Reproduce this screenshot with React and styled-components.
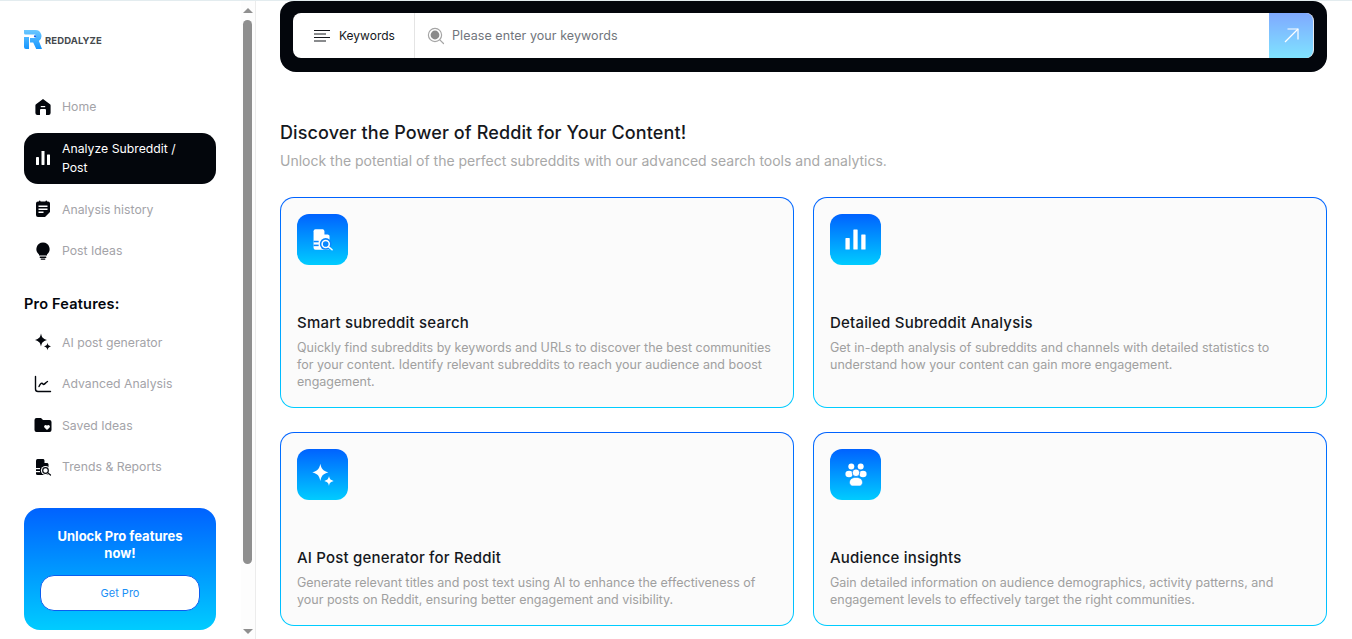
import React from "react";
import styled, { createGlobalStyle } from "styled-components";

const GlobalStyle = createGlobalStyle`
  html, body {
    margin: 0;
    height: 100%;
    background: #fff;
    overflow: hidden;
  }
  * {
    box-sizing: border-box;
  }
`;

const Page = styled.div`
  width: 100%;
  height: 100vh;
  display: flex;
  flex-direction: column;
  font-family: "Inter", "Liberation Sans", sans-serif;
  overflow: hidden;
`;

const TopStrip = styled.div`
  flex: none;
  height: 1px;
  background: #e3ecef;
`;

const Body = styled.div`
  flex: 1;
  min-height: 0;
  display: flex;
`;

const Sidebar = styled.aside`
  flex: none;
  width: 256px;
  display: flex;
  border-right: 1px solid #ececec;
`;

const SideContent = styled.div`
  flex: none;
  width: 241px;
  padding: 29px 24px 0;
`;

const ScrollTrack = styled.div`
  flex: 1;
  display: flex;
  flex-direction: column;
  align-items: center;
  padding: 7px 1px 0 0;
  background: #fdfdfd;
`;

const Arrow = styled.div`
  flex: none;
  width: 0;
  height: 0;
  border-left: 5px solid transparent;
  border-right: 5px solid transparent;
  ${(p) =>
    p.$down
      ? "border-top: 5px solid #8f8f8f;"
      : "border-bottom: 5px solid #8f8f8f;"}
`;

const Thumb = styled.div`
  flex: none;
  width: 9px;
  height: 544px;
  margin: 7px 0 65px;
  border-radius: 5px;
  background: #8f8f8f;
`;

const LogoRow = styled.div`
  display: flex;
  align-items: center;
  gap: 3px;
  height: 20px;
  margin-bottom: 36px;
`;

const LogoText = styled.span`
  font-size: 9.5px;
  font-weight: 700;
  letter-spacing: 0.1px;
  color: #45494d;
`;

const NavItem = styled.div`
  display: flex;
  align-items: center;
  gap: 10px;
  width: 192px;
  min-height: ${(p) => (p.$active ? "51px" : "41.5px")};
  padding: 0 30px 0 10px;
  border-radius: 14px;
  background: ${(p) => (p.$active ? "#03060c" : "transparent")};
  color: ${(p) => (p.$active ? "#fff" : "#a3a3a8")};
  font-size: 12.25px;
  line-height: 19px;
  margin: ${(p) => (p.$active ? "5px 0" : "0")};
`;

const NavIcon = styled.span`
  flex: none;
  width: 18px;
  height: 18px;
  display: flex;
  align-items: center;
  justify-content: center;
  color: ${(p) => (p.$active ? "#fff" : "#03060c")};
`;

const SectionLabel = styled.div`
  margin: 22px 0 8px;
  font-size: 14.5px;
  font-weight: 600;
  letter-spacing: 0.2px;
  line-height: 20px;
  color: #03060c;
`;

const ProCard = styled.div`
  width: 192px;
  height: 122px;
  margin-top: 20px;
  padding: 20px 16px 0;
  border-radius: 16px;
  background: linear-gradient(180deg, #0062ff 0%, #00ccff 100%);
`;

const ProTitle = styled.div`
  padding: 0 14px;
  font-size: 13px;
  font-weight: 700;
  line-height: 17px;
  text-align: center;
  color: #fff;
`;

const ProButton = styled.button`
  display: block;
  width: 160px;
  height: 36px;
  margin-top: 13px;
  border: 1px solid #0a5ef0;
  border-radius: 14px;
  background: #fff;
  color: #1b8ff5;
  font-family: inherit;
  font-size: 11px;
`;

const Main = styled.main`
  flex: 1;
  min-width: 0;
  padding: 0 25px 0 24px;
`;

const SearchShell = styled.div`
  height: 71px;
  padding: 12px 13px 14px;
  border-radius: 14px 14px 16px 16px;
  background: #03060c;
`;

const SearchBar = styled.div`
  height: 45px;
  display: flex;
  align-items: stretch;
  border-radius: 8px;
  background: #fff;
  overflow: hidden;
  border-right: 1px solid #e6e9ee;
`;

const KeywordCell = styled.div`
  flex: none;
  width: 122px;
  display: flex;
  align-items: center;
  gap: 8px;
  padding-left: 20px;
  border-right: 1px solid #e4e4e4;
  font-size: 12px;
  color: #15181d;
`;

const InputCell = styled.div`
  flex: 1;
  display: flex;
  align-items: center;
  gap: 7px;
  padding-left: 12px;
  font-size: 12.5px;
  letter-spacing: 0.07px;
  color: #71757c;
`;

const GoButton = styled.div`
  flex: none;
  width: 44px;
  display: flex;
  align-items: center;
  justify-content: center;
  background: linear-gradient(180deg, #7fa9ff 0%, #7fe3ff 100%);
`;

const Heading = styled.h1`
  margin: 49px 0 0;
  font-size: 18px;
  font-weight: 450;
  letter-spacing: 0.11px;
  line-height: 24px;
  color: #15181d;
`;

const Subheading = styled.p`
  margin: 7px 0 0;
  font-size: 14px;
  line-height: 18px;
  color: #a8a8a8;
`;

const CardGrid = styled.div`
  display: grid;
  grid-template-columns: 514px 514px;
  grid-template-rows: 211px 194px;
  gap: 24px 19px;
  margin-top: 27px;
`;

const Card = styled.div`
  padding: 16px;
  border: 1px solid transparent;
  border-radius: 14px;
  background: linear-gradient(#fbfbfb, #fbfbfb) padding-box,
    linear-gradient(180deg, #0062ff 0%, #00ccff 100%) border-box;
`;

const CardIcon = styled.div`
  width: 51px;
  height: 51px;
  display: flex;
  align-items: center;
  justify-content: center;
  border-radius: 12px;
  background: linear-gradient(180deg, #0062ff 0%, #00ccff 100%);
  color: #fff;
`;

const CardTitle = styled.h2`
  margin: 48px 0 0;
  font-size: 15px;
  font-weight: 450;
  letter-spacing: 0.2px;
  line-height: 20px;
  color: #15181d;
`;

const CardText = styled.p`
  margin: 6px 0 0;
  font-size: 12.5px;
  line-height: 17px;
  color: #a0a0a0;
`;

const HomeIcon = () => (
  <svg width="18" height="18" viewBox="0 0 18 18" fill="currentColor">
    <path d="M9 1 L16 6.2 a1.5 1.5 0 0 1 .6 1.2 V15 a2 2 0 0 1-2 2 H12 v-5 a1 1 0 0 0-1-1 H7 a1 1 0 0 0-1 1 v5 H3.4 a2 2 0 0 1-2-2 V7.4 a1.5 1.5 0 0 1 .6-1.2 Z" />
    <rect x="6.8" y="8" width="4.4" height="1.2" fill="#fff" />
  </svg>
);

const BarsIcon = ({ size = 16 }) => (
  <svg width={size} height={size} viewBox="0 0 16 16" fill="currentColor">
    <rect x="1" y="7" width="3" height="8" rx="0.4" />
    <rect x="6.5" y="1" width="3" height="14" rx="0.4" />
    <rect x="12" y="4.5" width="3" height="10.5" rx="0.4" />
  </svg>
);

const HistoryIcon = () => (
  <svg width="16" height="18" viewBox="0 0 16 18" fill="currentColor">
    <path d="M3 1.5 h10 a2 2 0 0 1 2 2 V12 l-5 5 H3 a2 2 0 0 1-2-2 V3.5 a2 2 0 0 1 2-2 Z" />
    <rect x="4" y="0.5" width="1.4" height="3" rx="0.7" />
    <rect x="10.6" y="0.5" width="1.4" height="3" rx="0.7" />
    <rect x="3.5" y="5.5" width="9" height="1.5" fill="#fff" />
    <rect x="3.5" y="8.5" width="9" height="1.5" fill="#fff" />
    <rect x="3.5" y="11.5" width="5" height="1.5" fill="#fff" />
  </svg>
);

const BulbIcon = () => (
  <svg width="16" height="18" viewBox="0 0 16 18" fill="currentColor">
    <path d="M8 0.5 a6.7 6.7 0 0 1 4 12 V13.5 H4 V12.5 a6.7 6.7 0 0 1 4-12 Z" />
    <rect x="4.6" y="14.6" width="6.8" height="1.3" rx="0.6" />
    <rect x="5.6" y="16.5" width="4.8" height="1.2" rx="0.6" />
  </svg>
);

const SparkIcon = ({ size = 18 }) => (
  <svg width={size} height={size} viewBox="0 0 18 18" fill="currentColor">
    <path d="M7 0.5 C7.8 4.4 8.8 5.6 13 7 C8.8 8.4 7.8 9.6 7 13.5 C6.2 9.6 5.2 8.4 1 7 C5.2 5.6 6.2 4.4 7 0.5 Z" />
    <path d="M13.5 9.8 C13.9 12 14.6 12.7 17 13.5 C14.6 14.3 13.9 15 13.5 17.2 C13.1 15 12.4 14.3 10 13.5 C12.4 12.7 13.1 12 13.5 9.8 Z" />
  </svg>
);

const ChartIcon = () => (
  <svg width="18" height="18" viewBox="0 0 18 18" fill="none" stroke="currentColor" strokeWidth="1.4" strokeLinecap="round" strokeLinejoin="round">
    <path d="M1.5 1.5 V14 a2.5 2.5 0 0 0 2.5 2.5 H16.5" />
    <path d="M5 11.5 C6.5 8 8 7.5 9 9 C10 10.5 11 8 13.5 6.5" />
  </svg>
);

const FolderIcon = () => (
  <svg width="18" height="16" viewBox="0 0 18 16" fill="currentColor">
    <path d="M2.5 1 H7 L9 3 H15.5 a2 2 0 0 1 2 2 V13 a2 2 0 0 1-2 2 H2.5 a2 2 0 0 1-2-2 V3 a2 2 0 0 1 2-2 Z" />
    <path d="M13 13 L10.4 10.4 a1.5 1.5 0 0 1 2.1-2.1 L13 8.8 L13.5 8.3 a1.5 1.5 0 0 1 2.1 2.1 Z" fill="#fff" />
  </svg>
);

const DocSearchIcon = ({ size = 18, hole = "#fff" }) => (
  <svg width={size} height={size} viewBox="0 0 18 18" fill="currentColor">
    <path d="M3.5 1 H9.5 L14.5 6 V15.5 a1.5 1.5 0 0 1-1.5 1.5 H3.5 A1.5 1.5 0 0 1 2 15.5 V2.5 A1.5 1.5 0 0 1 3.5 1 Z" />
    <path d="M10.5 1.2 L14.3 5 H10.5 Z" fill={hole} />
    <rect x="2" y="10" width="4" height="1.2" fill={hole} />
    <rect x="2" y="13" width="4" height="1.2" fill={hole} />
    <circle cx="11.5" cy="12.5" r="4.6" fill={hole} />
    <circle cx="11.5" cy="12.5" r="2.8" fill="none" stroke="currentColor" strokeWidth="1.2" />
    <path d="M13.6 14.6 L16.5 17" stroke="currentColor" strokeWidth="1.2" strokeLinecap="round" />
  </svg>
);

const PeopleIcon = () => (
  <svg width="22" height="23" viewBox="0 0 22 23" fill="currentColor">
    <circle cx="6.3" cy="3.5" r="3" />
    <circle cx="15.7" cy="3.5" r="3" />
    <ellipse cx="4" cy="11" rx="3.6" ry="3.2" />
    <ellipse cx="18" cy="11" rx="3.6" ry="3.2" />
    <circle cx="11" cy="9.8" r="3.8" stroke="#0a86ff" strokeWidth="0.8" />
    <path d="M4.5 19.5 C4.5 16 7.5 14.4 11 14.4 C14.5 14.4 17.5 16 17.5 19.5 C17.5 21.6 16 23 14.5 23 H7.5 C6 23 4.5 21.6 4.5 19.5 Z" stroke="#0a9cff" strokeWidth="0.6" />
  </svg>
);

const LogoIcon = () => (
  <svg width="18" height="20" viewBox="0 0 18 20">
    <defs>
      <linearGradient id="logoFill" x1="0" y1="0" x2="0" y2="1">
        <stop offset="0" stopColor="#6cc8ff" />
        <stop offset="1" stopColor="#1596ff" />
      </linearGradient>
    </defs>
    <path
      fill="url(#logoFill)"
      d="M0 0 H11.5 a6 6 0 0 1 3.4 10.9 L18 19 H12.2 L9.2 12.4 H6 V8 H11 a2 2 0 0 0 0-3.4 H1.5 a1.5 1.5 0 0 1-1.5-1.5 Z M0 7 H5 V19 H2 a2 2 0 0 1-2-2 Z"
    />
    <circle cx="11" cy="6.3" r="1.1" fill="#0a5ef0" />
  </svg>
);

const MenuIcon = () => (
  <svg width="18" height="14" viewBox="0 0 18 14" stroke="#15181d" strokeWidth="1.2">
    <path d="M1 1.5 H17" />
    <path d="M1 5 H13" />
    <path d="M1 8.5 H17" />
    <path d="M1 12 H13" />
  </svg>
);

const SearchIcon = () => (
  <svg width="18" height="18" viewBox="0 0 18 18" fill="none">
    <circle cx="8" cy="8" r="6.6" stroke="#a5a5a5" strokeWidth="1.2" />
    <circle cx="8" cy="8" r="4.4" fill="#8a8a8a" />
    <path d="M12.8 12.8 L16.5 16.5" stroke="#a5a5a5" strokeWidth="1.2" strokeLinecap="round" />
  </svg>
);

const ArrowIcon = () => (
  <svg width="15" height="15" viewBox="0 0 15 15" fill="none" stroke="#fff" strokeWidth="1.2">
    <path d="M1 14 L14 1" />
    <path d="M3.5 1 H14 V11.5" />
  </svg>
);

const cards = [
  {
    title: "Smart subreddit search",
    text: "Quickly find subreddits by keywords and URLs to discover the best communities for your content. Identify relevant subreddits to reach your audience and boost engagement.",
    icon: <DocSearchIcon size={23} hole="#0a86ff" />,
  },
  {
    title: "Detailed Subreddit Analysis",
    text: "Get in-depth analysis of subreddits and channels with detailed statistics to understand how your content can gain more engagement.",
    icon: <BarsIcon size={23} />,
  },
  {
    title: "AI Post generator for Reddit",
    text: "Generate relevant titles and post text using AI to enhance the effectiveness of your posts on Reddit, ensuring better engagement and visibility.",
    icon: <SparkIcon size={24} />,
  },
  {
    title: "Audience insights",
    text: "Gain detailed information on audience demographics, activity patterns, and engagement levels to effectively target the right communities.",
    icon: <PeopleIcon />,
  },
];

export default function App() {
  return (
    <Page>
      <GlobalStyle />
      <TopStrip />
      <Body>
        <Sidebar>
          <SideContent>
            <LogoRow>
              <LogoIcon />
              <LogoText>REDDALYZE</LogoText>
            </LogoRow>
            <NavItem>
              <NavIcon><HomeIcon /></NavIcon>
              Home
            </NavItem>
            <NavItem $active>
              <NavIcon $active><BarsIcon /></NavIcon>
              Analyze Subreddit / Post
            </NavItem>
            <NavItem>
              <NavIcon><HistoryIcon /></NavIcon>
              Analysis history
            </NavItem>
            <NavItem>
              <NavIcon><BulbIcon /></NavIcon>
              Post Ideas
            </NavItem>
            <SectionLabel>Pro Features:</SectionLabel>
            <NavItem>
              <NavIcon><SparkIcon /></NavIcon>
              AI post generator
            </NavItem>
            <NavItem>
              <NavIcon><ChartIcon /></NavIcon>
              Advanced Analysis
            </NavItem>
            <NavItem>
              <NavIcon><FolderIcon /></NavIcon>
              Saved Ideas
            </NavItem>
            <NavItem>
              <NavIcon><DocSearchIcon /></NavIcon>
              Trends &amp; Reports
            </NavItem>
            <ProCard>
              <ProTitle>Unlock Pro features now!</ProTitle>
              <ProButton>Get Pro</ProButton>
            </ProCard>
          </SideContent>
          <ScrollTrack>
            <Arrow />
            <Thumb />
            <Arrow $down />
          </ScrollTrack>
        </Sidebar>
        <Main>
          <SearchShell>
            <SearchBar>
              <KeywordCell>
                <MenuIcon />
                Keywords
              </KeywordCell>
              <InputCell>
                <SearchIcon />
                Please enter your keywords
              </InputCell>
              <GoButton>
                <ArrowIcon />
              </GoButton>
            </SearchBar>
          </SearchShell>
          <Heading>Discover the Power of Reddit for Your Content!</Heading>
          <Subheading>
            Unlock the potential of the perfect subreddits with our advanced search tools and analytics.
          </Subheading>
          <CardGrid>
            {cards.map((card) => (
              <Card key={card.title}>
                <CardIcon>{card.icon}</CardIcon>
                <CardTitle>{card.title}</CardTitle>
                <CardText>{card.text}</CardText>
              </Card>
            ))}
          </CardGrid>
        </Main>
      </Body>
    </Page>
  );
}
